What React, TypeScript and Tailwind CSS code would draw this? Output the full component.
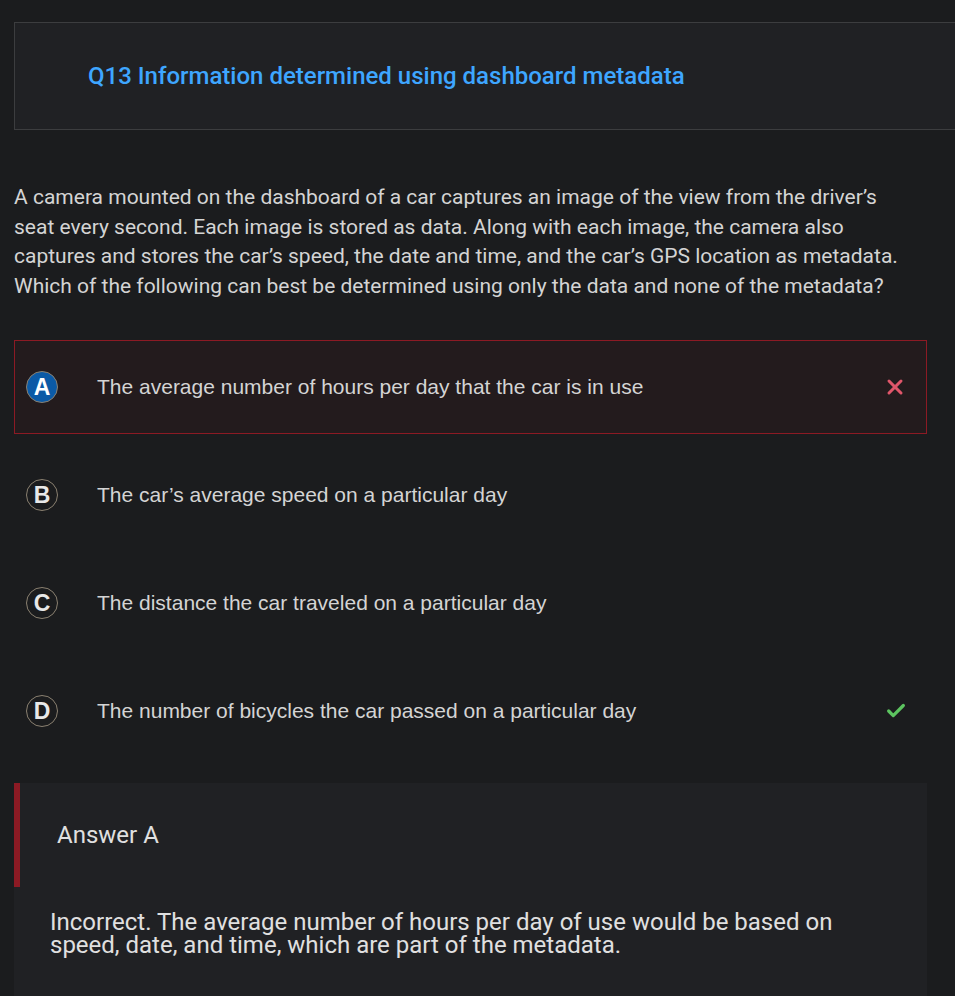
import { Check, X } from "lucide-react";

const options = [
  { letter: "A", text: "The average number of hours per day that the car is in use", state: "wrong" },
  { letter: "B", text: "The car\u2019s average speed on a particular day", state: "none" },
  { letter: "C", text: "The distance the car traveled on a particular day", state: "none" },
  { letter: "D", text: "The number of bicycles the car passed on a particular day", state: "right" },
];

const App = () => {
  return (
    <div className="min-h-[996px] overflow-hidden bg-[#1b1c1e] pt-[22px] pl-[14px] font-['Roboto',sans-serif]">
      {/* Question header */}
      <div className="-mr-4 flex h-[108px] items-center border border-[#3c3d3f] bg-[#202124] pl-[73px]">
        <h2 className="text-[24px] font-medium text-[#3ea6ff]">
          Q13 Information determined using dashboard metadata
        </h2>
      </div>

      <div className="w-[913px]">
        <p className="mt-[53px] w-[900px] text-[21px] leading-[29.5px] text-[#d4d4d4]">
          A camera mounted on the dashboard of a car captures an image of the view from the driver’s seat every
          second. Each image is stored as data. Along with each image, the camera also captures and stores the car’s
          speed, the date and time, and the car’s GPS location as metadata. Which of the following can best be
          determined using only the data and none of the metadata?
        </p>

        <div className="mt-[39px] flex flex-col gap-[14px]">
          {options.map(o => (
            <div
              key={o.letter}
              className={
                o.state === "wrong"
                  ? "flex h-[94px] items-center border border-[#8c1a24] bg-[#231b1d] pl-[11px] pr-[19px]"
                  : "flex h-[94px] items-center border border-transparent pl-[11px] pr-[19px]"
              }
            >
              <span
                className={
                  o.letter === "A"
                    ? "flex h-[32px] w-[32px] items-center justify-center rounded-full border border-[#8a8070] bg-[#0b5aa6] font-['Liberation_Sans',Arial,sans-serif] text-[23px] font-bold leading-none text-white"
                    : "flex h-[32px] w-[32px] items-center justify-center rounded-full border border-[#8a8070] font-['Liberation_Sans',Arial,sans-serif] text-[23px] font-bold leading-none text-[#e8e8e8]"
                }
              >
                {o.letter}
              </span>
              <span className="ml-[39px] flex-1 font-['Liberation_Sans',Arial,sans-serif] text-[21px] text-[#d4d4d4]">
                {o.text}
              </span>
              {o.state === "wrong" && <X size={24} strokeWidth={3} className="text-[#e0566a]" />}
              {o.state === "right" && <Check size={22} strokeWidth={3.5} className="text-[#5cc460]" />}
            </div>
          ))}
        </div>

        {/* Answer explanation */}
        <div className="mt-[25px] bg-[#202124] pb-10">
          <div className="flex h-[104px] items-center border-l-[6px] border-[#8c1a24] pl-[37px]">
            <span className="text-[24px] text-[#e0e0e0]">Answer A</span>
          </div>
          <p className="mt-[24px] pl-[36px] pr-8 text-[24px] leading-[23px] text-[#e0e0e0]">
            Incorrect. The average number of hours per day of use would be based on speed, date, and time, which are
            part of the metadata.
          </p>
        </div>
      </div>
    </div>
  );
};

export default App;
